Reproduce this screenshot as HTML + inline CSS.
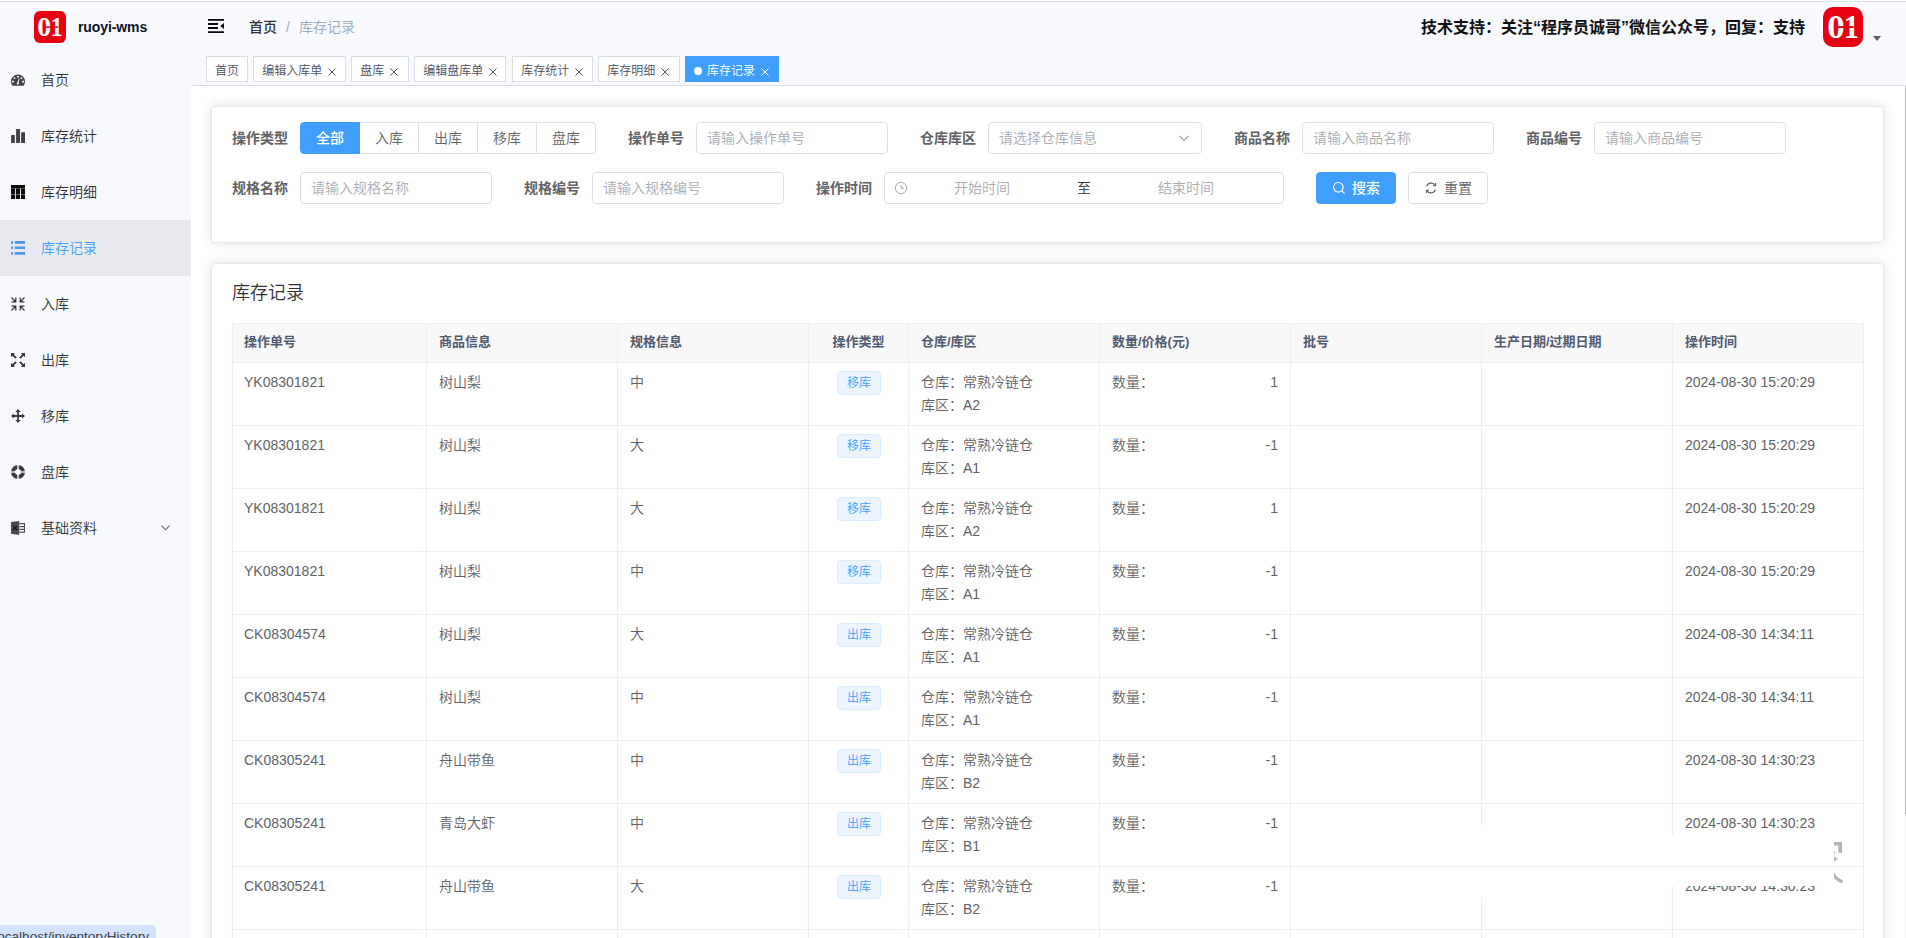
<!DOCTYPE html>
<html lang="zh-CN">
<head>
<meta charset="utf-8">
<title>ruoyi-wms</title>
<style>
*{box-sizing:border-box;margin:0;padding:0}
html,body{width:1906px;height:938px;overflow:hidden}
body{font-family:"Liberation Sans","Noto Sans CJK SC",sans-serif;font-weight:350;font-size:14px;color:#606266;background:#fff;position:relative}
.abs{position:absolute}
/* top hairline */
#topline{position:absolute;left:0;top:0;width:1906px;height:2px;background:#fff;border-bottom:1px solid #dfdfdf;z-index:50}
/* sidebar */
#sidebar{position:absolute;left:0;top:0;width:191px;height:938px;background:#f8f9fd}
#logo{position:absolute;left:34px;top:11px;width:32px;height:32px}
#title{position:absolute;left:78px;top:0;height:54px;line-height:54px;font-size:14px;font-weight:bold;color:#0b1325;letter-spacing:-0.1px}
.mi{position:absolute;left:0;width:191px;height:56px;line-height:56px;color:#303133;font-size:14px}
.mi span{position:absolute;left:41px;top:0}
.mi svg{position:absolute;left:11px;top:21px;width:14px;height:14px;fill:#454545}
.mi.act{background:#e8e9ee;color:#409eff}

/* navbar */
#navbar{position:absolute;left:191px;top:0;width:1715px;height:52px;background:#f8f9fd}
#tags{position:absolute;left:191px;top:52px;width:1715px;height:34px;background:#f8f9fd;border-bottom:1px solid #d8dce5}
.bc{position:absolute;top:0;height:54px;line-height:54px;font-size:14px}
.tag{position:absolute;top:4px;height:26px;line-height:28px;border:1px solid #d8dce5;background:#fff;color:#495060;font-size:12px;padding:0 8px;white-space:nowrap}
.tag .x{display:inline-block;width:8px;height:8px;margin-left:6px;vertical-align:-1px;overflow:visible}
.tag.act{background:#409eff;border-color:#409eff;color:#fff}
.tag.act:before{content:"";display:inline-block;width:8px;height:8px;border-radius:50%;background:#fff;margin-right:5px;position:relative;top:0}
#support{position:absolute;left:1421px;top:1px;height:53px;line-height:53px;font-size:16px;font-weight:bold;color:#111;white-space:nowrap}
/* main */
#main{position:absolute;left:191px;top:86px;width:1715px;height:852px;background:#fff}
.card{position:absolute;left:211px;width:1673px;background:#fff;border:1px solid #e4e7ed;border-radius:4px;box-shadow:0 0 12px rgba(0,0,0,.12)}
.lbl{position:absolute;height:32px;line-height:32px;font-size:14px;font-weight:bold;color:#606266;white-space:nowrap}
.inp{position:absolute;height:32px;line-height:30px;border:1px solid #dcdfe6;border-radius:4px;background:#fff;color:#a8abb2;font-size:14px;padding:0 10px;white-space:nowrap}
.rb{position:absolute;top:122px;height:32px;line-height:30px;border:1px solid #dcdfe6;border-left:0;background:#fff;color:#606266;font-size:14px;text-align:center}
.rb.on{font-weight:500;background:#409eff;border-color:#409eff;color:#fff;border-radius:4px 0 0 4px;border-left:1px solid #409eff}
.rb.last{border-radius:0 4px 4px 0}
.btn{position:absolute;height:32px;line-height:30px;border:1px solid #dcdfe6;border-radius:4px;background:#fff;color:#606266;font-size:14px;white-space:nowrap}
.btn.pri{background:#409eff;border-color:#409eff;color:#fff;font-weight:500}
#tb{position:absolute;left:232px;top:323px;width:1632px;table-layout:fixed;border-collapse:separate;border-top:1px solid #ebeef5;font-size:14px;color:#606266}
#tb th{height:39px;background:#f8f8f9;color:#515a6e;font-size:13px;font-weight:bold;text-align:left;padding:0 12px 3px;border-right:1px solid #ebeef5;border-bottom:1px solid #ebeef5;line-height:23px;white-space:nowrap}
#tb td{height:63px;vertical-align:top;padding:8px 12px 0;border-right:1px solid #ebeef5;border-bottom:1px solid #ebeef5;line-height:23px;white-space:nowrap}
#tb .c{text-align:center}
.tg{display:inline-block;position:relative;left:.5px;height:24px;line-height:22px;padding:0 9px;font-size:12px;color:#409eff;background:#ecf5ff;border:1px solid #d9ecff;border-radius:4px;vertical-align:top;margin-top:0}
.q{display:flex;justify-content:space-between}
</style>
</head>
<body>
<div id="sidebar">
  <svg id="logo" viewBox="0 0 32 32"><rect width="32" height="32" rx="6" fill="#e60012"/><text transform="translate(3.3,25) scale(1.05,1)" font-family="Liberation Serif,serif" font-weight="bold" font-size="26.6" fill="#fff">0</text><text transform="translate(16.6,25) scale(0.92,1)" font-family="Liberation Serif,serif" font-weight="bold" font-size="26.6" fill="#fff">1</text><rect x="11.600" y="15.300" width="12.800" height="1.500" fill="#e60012"/></svg>
  <div id="title">ruoyi-wms</div>
  <div class="mi" style="top:52px"><svg viewBox="0 0 14 14"><path d="M7 1.400a7 7 0 0 0-7 7c0 1.400.4 2.700 1.100 3.800.2.300.5.600.9.600h10c.4 0 .7-.3.900-.600.700-1.100 1.100-2.400 1.100-3.800a7 7 0 0 0-7-7z" fill="#434448"/><g fill="#fff"><rect x="1" y="7.800" width="1.900" height="1.600" rx=".4"/><rect x="2.600" y="4.200" width="1.800" height="1.800" rx=".7"/><rect x="5.900" y="2.900" width="2" height="1.500" rx=".4"/><rect x="9.600" y="4.200" width="1.800" height="1.800" rx=".7"/><rect x="11.100" y="7.800" width="1.900" height="1.600" rx=".4"/><circle cx="6.900" cy="10.500" r="1.100"/><path d="M6.300 10.200l1.600-4.900.7.200-1.200 5z"/></g></svg><span>首页</span></div>
  <div class="mi" style="top:108px"><svg viewBox="0 0 14 14"><path d="M.1 6.100h3.700v7.900h-3.700zM5.100.1h3.900v13.900h-3.900zM10.100 3.200h3.900v10.800h-3.900z" fill="#3f4043"/></svg><span>库存统计</span></div>
  <div class="mi" style="top:164px"><svg viewBox="0 0 14 14"><rect width="14" height="14" fill="#0c0c0c"/><path d="M0 3.150h14v.5h-14z" fill="#777"/><path d="M0 9h14v.6h-14z" fill="#999"/><path d="M4.100 3.600h.8v10.400h-.8zM9.100 3.600h.9v10.400h-.9z" fill="#fff"/></svg><span>库存明细</span></div>
  <div class="mi act" style="top:220px"><svg viewBox="0 0 14 14"><path d="M.1 0h1.800v2.700h-1.800zM3.800 0h10.200v2.700h-10.200zM.1 5.500h1.800v2.600h-1.800zM3.800 5.500h10.200v2.600h-10.200zM.1 11h1.800v2.800h-1.800zM3.800 11h10.200v2.800h-10.200z" fill="#4a97ea"/></svg><span>库存记录</span></div>
  <div class="mi" style="top:276px"><svg viewBox="0 0 14 14"><path d="M.5.500l4.300 4.300M4.800.6v4.200h-4.200M13.500.5l-4.300 4.300M9.200.6v4.200h4.200M.5 13.500l4.300-4.300M4.800 13.400v-4.200h-4.200M13.500 13.500l-4.300-4.300M9.200 13.400v-4.200h4.200" fill="none" stroke="#2e2f33" stroke-width="1.200"/></svg><span>入库</span></div>
  <div class="mi" style="top:332px"><svg viewBox="0 0 14 14"><g fill="#36373b"><path d="M0 0h4.200l-1.400 1.400 3 3-1.400 1.400-3-3-1.400 1.400z"/><path d="M14 0h-4.200l1.400 1.400-3 3 1.400 1.400 3-3 1.400 1.400z"/><path d="M0 14h4.200l-1.400-1.400 3-3-1.400-1.400-3 3-1.400-1.400z"/><path d="M14 14h-4.200l1.400-1.400-3-3 1.400-1.400 3 3 1.400-1.400z"/></g></svg><span>出库</span></div>
  <div class="mi" style="top:388px"><svg viewBox="0 0 14 14"><path d="M7 0l2.600 2.900h-1.700v3.200h3.200v-1.700l2.900 2.600-2.900 2.600v-1.700h-3.200v3.200h1.700l-2.600 2.900-2.600-2.900h1.700v-3.200h-3.200v1.700l-2.900-2.600 2.900-2.600v1.700h3.200v-3.200h-1.700z" fill="#36373b"/></svg><span>移库</span></div>
  <div class="mi" style="top:444px"><svg viewBox="0 0 14 14"><circle cx="7" cy="7" r="4.900" fill="none" stroke="#3a3c41" stroke-width="4.200"/><path d="M6.150 0h1.700v14h-1.700zM0 6.150h14v1.700h-14z" fill="#dcdde0"/><circle cx="7" cy="7" r="2.800" fill="#f8f9fd"/></svg><span>盘库</span></div>
  <div class="mi" style="top:500px"><svg viewBox="0 0 14 14"><path d="M8.300 2h5.700v9.800h-5.700z" fill="#fff"/><path d="M8.300 2h5.700v1.200h-5.700zM8.300 5h4.700v1.200h-4.700zM8.300 7.800h4.700v1.200h-4.700zM8.300 10.600h5.700v1.200h-5.700zM13 2h1v9.800h-1z" fill="#4d4e50"/><path d="M0 1l8.200-1v14l-8.200-1.300z" fill="#4a4b4e"/><path d="M2.300 4.800l3.800 4.400M6.100 4.800l-3.800 4.400" stroke="#161616" stroke-width="1.200" fill="none"/></svg><span>基础资料</span><svg viewBox="0 0 12 12" style="left:159.500px;top:22px;width:11px;height:11px"><path d="M1.500 4l4.500 4.500 4.500-4.500" fill="none" stroke="#606266" stroke-width="1.100"/></svg></div>
</div>
<div id="navbar">
  <svg class="abs" style="left:17px;top:19px;width:16px;height:14px" viewBox="0 0 16 14"><path d="M0 0h16v1.800h-16zM0 4.100h10v1.800h-10zM0 8.100h10v1.800h-10zM0 12.200h16v1.800h-16zM16 4v6l-3.800-3z" fill="#0a0a0a"/></svg>
  <div class="bc" style="left:58px;color:#303133;font-weight:500">首页</div>
  <div class="bc" style="left:95px;color:#a8abb2">/</div>
  <div class="bc" style="left:108px;color:#97a8be">库存记录</div>
</div>
<div id="support">技术支持：关注“程序员诚哥”微信公众号，回复：支持</div>
<div id="tags">
  <div class="tag" style="left:15px;width:42px">首页</div>
  <div class="tag" style="left:62.3px;width:92.5px">编辑入库单<svg class="x" viewBox="0 0 8 8"><path d="M.5.5l7 7M7.500.5l-7 7" fill="none" stroke="currentColor" stroke-width="1"/></svg></div>
  <div class="tag" style="left:160.3px;width:57.3px">盘库<svg class="x" viewBox="0 0 8 8"><path d="M.5.5l7 7M7.500.5l-7 7" fill="none" stroke="currentColor" stroke-width="1"/></svg></div>
  <div class="tag" style="left:223.3px;width:92.2px">编辑盘库单<svg class="x" viewBox="0 0 8 8"><path d="M.5.5l7 7M7.500.5l-7 7" fill="none" stroke="currentColor" stroke-width="1"/></svg></div>
  <div class="tag" style="left:321.2px;width:80.4px">库存统计<svg class="x" viewBox="0 0 8 8"><path d="M.5.5l7 7M7.500.5l-7 7" fill="none" stroke="currentColor" stroke-width="1"/></svg></div>
  <div class="tag" style="left:407.2px;width:81.5px">库存明细<svg class="x" viewBox="0 0 8 8"><path d="M.5.5l7 7M7.500.5l-7 7" fill="none" stroke="currentColor" stroke-width="1"/></svg></div>
  <div class="tag act" style="left:494px;width:94px">库存记录<svg class="x" viewBox="0 0 8 8"><path d="M.5.5l7 7M7.500.5l-7 7" fill="none" stroke="currentColor" stroke-width="1"/></svg></div>
</div>
<div id="main"></div>
<div class="card" style="top:106px;height:137px"></div>
<div class="lbl" style="left:232px;top:122px">操作类型</div>
<div class="rb on" style="left:300px;width:60px">全部</div>
<div class="rb" style="left:360px;width:59px">入库</div>
<div class="rb" style="left:419px;width:59px">出库</div>
<div class="rb" style="left:478px;width:59px">移库</div>
<div class="rb last" style="left:537px;width:59px">盘库</div>
<div class="lbl" style="left:628px;top:122px">操作单号</div>
<div class="inp" style="left:696px;top:122px;width:192px">请输入操作单号</div>
<div class="lbl" style="left:920px;top:122px">仓库库区</div>
<div class="inp" style="left:988px;top:122px;width:214px">请选择仓库信息<svg class="abs" style="right:10px;top:8px;width:14px;height:14px" viewBox="0 0 14 14"><path d="M2.500 5l4.500 4.500 4.500-4.500" fill="none" stroke="#a8abb2" stroke-width="1.200"/></svg></div>
<div class="lbl" style="left:1234px;top:122px">商品名称</div>
<div class="inp" style="left:1302px;top:122px;width:192px">请输入商品名称</div>
<div class="lbl" style="left:1526px;top:122px">商品编号</div>
<div class="inp" style="left:1594px;top:122px;width:192px">请输入商品编号</div>
<div class="lbl" style="left:232px;top:172px">规格名称</div>
<div class="inp" style="left:300px;top:172px;width:192px">请输入规格名称</div>
<div class="lbl" style="left:524px;top:172px">规格编号</div>
<div class="inp" style="left:592px;top:172px;width:192px">请输入规格编号</div>
<div class="lbl" style="left:816px;top:172px">操作时间</div>
<div class="inp" style="left:884px;top:172px;width:400px;padding:0">
  <svg class="abs" style="left:9px;top:8px;width:14px;height:14px" viewBox="0 0 14 14"><circle cx="7" cy="7" r="5.600" fill="none" stroke="#a8abb2" stroke-width="1"/><path d="M7 3.800v3.400h2.800" fill="none" stroke="#a8abb2" stroke-width="1"/></svg>
  <span class="abs" style="left:69px;top:0">开始时间</span>
  <span class="abs" style="left:192px;top:0;color:#303133">至</span>
  <span class="abs" style="left:273px;top:0">结束时间</span>
</div>
<div class="btn pri" style="left:1316px;top:172px;width:80px"><svg class="abs" style="left:15px;top:8px;width:14px;height:14px" viewBox="0 0 14 14"><circle cx="6.300" cy="6.300" r="4.800" fill="none" stroke="#fff" stroke-width="1.200"/><path d="M9.800 9.800l2.800 2.800" stroke="#fff" stroke-width="1.200"/></svg><span class="abs" style="left:35px;top:0">搜索</span></div>
<div class="btn" style="left:1408px;top:172px;width:80px"><svg class="abs" style="left:15px;top:8px;width:14px;height:14px" viewBox="0 0 14 14"><path d="M2.600 5.200a4.800 4.800 0 0 1 8.600-.8M11.400 8.800a4.800 4.800 0 0 1-8.600.8" fill="none" stroke="#606266" stroke-width="1.100"/><path d="M11.600 2v2.700h-2.700M2.400 12v-2.700h2.700" fill="none" stroke="#606266" stroke-width="1.100"/></svg><span class="abs" style="left:35px;top:0">重置</span></div>
<!--CARD1END-->
<div class="card" style="top:263px;height:700px"></div>
<div class="abs" style="left:232px;top:279px;height:28px;line-height:28px;font-size:18px;color:#303133">库存记录</div>
<table id="tb" cellspacing="0" cellpadding="0"><colgroup><col style="width:195px"><col style="width:191px"><col style="width:191px"><col style="width:100px"><col style="width:191px"><col style="width:191px"><col style="width:191px"><col style="width:191px"><col style="width:191px"></colgroup>
<thead><tr><th>操作单号</th><th>商品信息</th><th>规格信息</th><th class="c">操作类型</th><th>仓库/库区</th><th>数量/价格(元)</th><th>批号</th><th>生产日期/过期日期</th><th>操作时间</th></tr></thead>
<tbody>
<tr><td>YK08301821</td><td>树山梨</td><td>中</td><td class="c"><span class="tg">移库</span></td><td>仓库：常熟冷链仓<br>库区：A2</td><td><div class="q"><span>数量：</span><span>1</span></div></td><td></td><td></td><td>2024-08-30 15:20:29</td></tr>
<tr><td>YK08301821</td><td>树山梨</td><td>大</td><td class="c"><span class="tg">移库</span></td><td>仓库：常熟冷链仓<br>库区：A1</td><td><div class="q"><span>数量：</span><span>-1</span></div></td><td></td><td></td><td>2024-08-30 15:20:29</td></tr>
<tr><td>YK08301821</td><td>树山梨</td><td>大</td><td class="c"><span class="tg">移库</span></td><td>仓库：常熟冷链仓<br>库区：A2</td><td><div class="q"><span>数量：</span><span>1</span></div></td><td></td><td></td><td>2024-08-30 15:20:29</td></tr>
<tr><td>YK08301821</td><td>树山梨</td><td>中</td><td class="c"><span class="tg">移库</span></td><td>仓库：常熟冷链仓<br>库区：A1</td><td><div class="q"><span>数量：</span><span>-1</span></div></td><td></td><td></td><td>2024-08-30 15:20:29</td></tr>
<tr><td>CK08304574</td><td>树山梨</td><td>大</td><td class="c"><span class="tg">出库</span></td><td>仓库：常熟冷链仓<br>库区：A1</td><td><div class="q"><span>数量：</span><span>-1</span></div></td><td></td><td></td><td>2024-08-30 14:34:11</td></tr>
<tr><td>CK08304574</td><td>树山梨</td><td>中</td><td class="c"><span class="tg">出库</span></td><td>仓库：常熟冷链仓<br>库区：A1</td><td><div class="q"><span>数量：</span><span>-1</span></div></td><td></td><td></td><td>2024-08-30 14:34:11</td></tr>
<tr><td>CK08305241</td><td>舟山带鱼</td><td>中</td><td class="c"><span class="tg">出库</span></td><td>仓库：常熟冷链仓<br>库区：B2</td><td><div class="q"><span>数量：</span><span>-1</span></div></td><td></td><td></td><td>2024-08-30 14:30:23</td></tr>
<tr><td>CK08305241</td><td>青岛大虾</td><td>中</td><td class="c"><span class="tg">出库</span></td><td>仓库：常熟冷链仓<br>库区：B1</td><td><div class="q"><span>数量：</span><span>-1</span></div></td><td></td><td></td><td>2024-08-30 14:30:23</td></tr>
<tr><td>CK08305241</td><td>舟山带鱼</td><td>大</td><td class="c"><span class="tg">出库</span></td><td>仓库：常熟冷链仓<br>库区：B2</td><td><div class="q"><span>数量：</span><span>-1</span></div></td><td></td><td></td><td>2024-08-30 14:30:23</td></tr>
<tr><td>CK08305241</td><td>青岛大虾</td><td>大</td><td class="c"><span class="tg">出库</span></td><td>仓库：常熟冷链仓<br>库区：B1</td><td><div class="q"><span>数量：</span><span>-1</span></div></td><td></td><td></td><td>2024-08-30 14:30:23</td></tr>
</tbody></table>
<div class="abs" style="left:232px;top:323px;width:1px;height:615px;background:#ebeef5"></div>
<!--CARD2END-->
<svg class="abs" style="left:1823px;top:7px;width:40px;height:40px" viewBox="0 0 32 32"><rect width="32" height="32" rx="8" fill="#e60012"/><text transform="translate(3.3,25) scale(1.05,1)" font-family="Liberation Serif,serif" font-weight="bold" font-size="26.6" fill="#fff">0</text><text transform="translate(16.6,25) scale(0.92,1)" font-family="Liberation Serif,serif" font-weight="bold" font-size="26.6" fill="#fff">1</text><rect x="11.600" y="15.300" width="12.800" height="1.500" fill="#e60012"/></svg>
<svg class="abs" style="left:1873px;top:36px;width:8px;height:5px" viewBox="0 0 8 5"><path d="M0 0h8l-4 5z" fill="#5a5e66"/></svg>
<div class="abs" style="left:1905px;top:86px;width:1px;height:728px;background:#bdbdbd"></div>
<div class="abs" style="left:1905px;top:814px;width:1px;height:124px;background:#f3f3f3"></div>
<div class="abs" style="left:1481px;top:825px;width:3px;height:41px;background:#fff"></div>
<div class="abs" style="left:1481px;top:867px;width:3px;height:30px;background:#fff"></div>
<div class="abs" style="left:1670px;top:836px;width:170px;height:30px;background:#fff"></div>
<div class="abs" style="left:1670px;top:867px;width:170px;height:19px;background:#fff"></div>
<svg class="abs" style="left:1834px;top:842px;width:10px;height:42px" viewBox="0 0 10 42"><path d="M0 0h8v10.800h-3.700v-7.300h-4.300zM0 9.200h.8v2.800h-.8zM0 14.400l3.900 2.300-3.900 2.800zM0 30.200c1.500 3.600 5 6.700 9.400 8.200l-1.900 2.900c-3.300-1.300-6.200-3.400-7.500-5.800z" fill="#b3b3b3"/></svg>
<div class="abs" style="left:0;top:925px;width:156px;height:14px;background:#d3e3fd;border-top-right-radius:4px;overflow:hidden;z-index:60"><span class="abs" style="right:7px;top:3.500px;line-height:16px;font-size:13.6px;color:#3c4043;white-space:nowrap">localhost/inventoryHistory</span></div>
<!--EXTRAS-->
<div id="topline"></div>
</body>
</html>
